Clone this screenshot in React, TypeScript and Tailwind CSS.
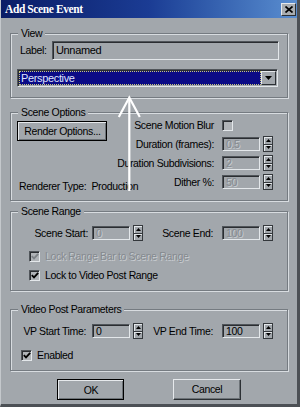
import React from 'react';

const face = 'bg-[#a2a7ac]';

function Sunken({ w, value, disabled, className = '' }: { w: string; value: string; disabled?: boolean; className?: string }) {
  return (
    <div
      className={
        'flex items-center border border-t-[#50555a] border-l-[#50555a] border-b-[#e3e7ea] border-r-[#e3e7ea] shadow-[inset_1px_1px_0_#2a2d31] pl-[3px] ' +
        w + ' ' + className + ' ' +
        (disabled ? 'text-[#858a8f] [text-shadow:1px_1px_0_#c9cdd1]' : 'text-black')
      }
    >
      {value}
    </div>
  );
}

function Spin() {
  return (
    <div className="ml-[3px] flex h-[16px] w-[10px] shrink-0 flex-col border border-[#34383c] bg-[#a2a7ac]">
      <div className="flex flex-1 items-center justify-center border-b border-[#34383c] shadow-[inset_1px_1px_0_#e3e7ea]">
        <svg width="5" height="3" viewBox="0 0 5 3"><path d="M2.5 0L5 3H0z" fill="#000" /></svg>
      </div>
      <div className="flex flex-1 items-center justify-center shadow-[inset_1px_1px_0_#e3e7ea]">
        <svg width="5" height="3" viewBox="0 0 5 3"><path d="M0 0H5L2.5 3z" fill="#000" /></svg>
      </div>
    </div>
  );
}

function Check({ checked, disabled }: { checked?: boolean; disabled?: boolean }) {
  return (
    <div className="flex h-[11px] w-[11px] shrink-0 items-center justify-center border border-t-[#50555a] border-l-[#50555a] border-b-[#e3e7ea] border-r-[#e3e7ea] bg-[#b0b4b8] shadow-[inset_1px_1px_0_#2a2d31]">
      {checked && (
        <svg width="8" height="7" viewBox="0 0 8 7">
          <path d="M0.8 3.2L3 5.4L7.2 0.8" fill="none" stroke={disabled ? '#7d8287' : '#000'} strokeWidth="1.8" />
        </svg>
      )}
    </div>
  );
}

function Group({ title, className, children }: { title: string; className: string; children: React.ReactNode }) {
  return (
    <fieldset className={'ml-[9px] w-[278px] shrink-0 border border-[#757b81] pl-[6px] shadow-[inset_1px_1px_0_#d8dce0,1px_1px_0_#d8dce0] ' + className}>
      <legend className="ml-[1px] bg-[#a2a7ac] px-[3px] leading-[13px]">{title}</legend>
      {children}
    </fieldset>
  );
}

export default function App() {
  return (
    <div className={"relative flex h-[407px] w-[300px] flex-col overflow-hidden whitespace-nowrap border-l border-r-[3px] border-b-[3px] border-l-[#c4c8cc] border-r-[#4c5055] border-b-[#4c5055] text-[10.5px] leading-[13px] tracking-[-0.35px] text-black font-['Liberation_Sans',Arial,sans-serif] " + face}>
      {/* title bar */}
      <div className="flex h-[18px] shrink-0 items-center justify-between bg-linear-to-r from-[#0a1c66] via-[#1b3c94] to-[#5a8ed0] pl-[4px] pr-[1px]">
        <span className="font-['Liberation_Serif',serif] text-[11.5px] font-bold tracking-[-0.4px] text-white">Add Scene Event</span>
        <div className="flex h-[13px] w-[15px] items-center justify-center border border-t-[#e6e9ec] border-l-[#e6e9ec] border-b-[#2c3034] border-r-[#2c3034] bg-[#a9adb1]">
          <svg width="8" height="7" viewBox="0 0 8 7">
            <path d="M0.5 0.5L7.5 6.5M7.5 0.5L0.5 6.5" stroke="#000" strokeWidth="1.7" />
          </svg>
        </div>
      </div>

      {/* View */}
      <Group title="View" className="mt-[9px] pr-[8px] pb-[10px]">
        <div className="mt-[1px] flex items-center">
          <span className="ml-[3px] w-[32px]">Label:</span>
          <Sunken w="flex-1" value="Unnamed" className="h-[19px] text-[11px]" />
        </div>
        <div className="mt-[9px] mr-[1px] flex h-[18px] border border-t-[#50555a] border-l-[#50555a] border-b-[#e3e7ea] border-r-[#e3e7ea] shadow-[inset_1px_1px_0_#2a2d31] p-[1px]">
          <div className="flex flex-1 items-center bg-[#0b0b86] pl-[2px] text-[11px] text-[#dfe2ff] outline-1 outline-dotted outline-[#c8c87a] -outline-offset-1">
            Perspective
          </div>
          <div className="flex w-[15px] items-center justify-center border border-t-[#e6e9ec] border-l-[#e6e9ec] border-b-[#2c3034] border-r-[#2c3034] bg-[#a2a7ac]">
            <svg width="7" height="4" viewBox="0 0 7 4"><path d="M0 0H7L3.5 4z" fill="#000" /></svg>
          </div>
        </div>
      </Group>

      {/* Scene Options */}
      <Group title="Scene Options" className="mt-[8px] pr-[14px] pb-[7px]">
        <div className="flex">
          <div className="flex w-[90px] shrink-0 flex-col">
            <div className="mt-[2px] flex h-[20px] w-[90px] items-center justify-center border border-black">
              <div className="flex h-full w-full items-center justify-center border-t border-l border-t-[#e6e9ec] border-l-[#e6e9ec] shadow-[inset_-1px_-1px_0_#6d7378]">
                Render Options...
              </div>
            </div>
            <div className="mt-[39px] ml-[2px] whitespace-pre">Renderer Type:  Production</div>
          </div>
          <div className="flex min-w-0 flex-1 flex-col items-end">
            <div className="flex h-[12px] items-center">
              <span>Scene Motion Blur</span>
              <div className="ml-[8px] w-[51px]"><Check /></div>
            </div>
            <div className="mt-[5px] flex items-center">
              <span>Duration (frames):</span>
              <Sunken w="ml-[8px] w-[38px]" value="0.5" disabled className="h-[14px]" />
              <Spin />
            </div>
            <div className="mt-[3px] flex items-center">
              <span>Duration Subdivisions:</span>
              <Sunken w="ml-[8px] w-[38px]" value="2" disabled className="h-[14px]" />
              <Spin />
            </div>
            <div className="mt-[3px] flex items-center">
              <span>Dither %:</span>
              <Sunken w="ml-[8px] w-[38px]" value="50" disabled className="h-[14px]" />
              <Spin />
            </div>
          </div>
        </div>
      </Group>

      {/* Scene Range */}
      <Group title="Scene Range" className="mt-[4px] pr-[14px] pb-[8px]">
        <div className="mt-[7px] flex items-center">
          <span className="w-[71px] text-right">Scene Start:</span>
          <Sunken w="ml-[4px] w-[38px]" value="0" disabled className="h-[14px]" />
          <Spin />
          <span className="w-[70px] text-right">Scene End:</span>
          <Sunken w="ml-[9px] w-[38px]" value="100" disabled className="h-[14px]" />
          <Spin />
        </div>
        <div className="mt-[9px] ml-[12px] flex items-center">
          <Check checked disabled />
          <span className="ml-[5px] text-[#858a8f] [text-shadow:1px_1px_0_#c9cdd1]">Lock Range Bar to Scene Range</span>
        </div>
        <div className="mt-[6px] ml-[12px] flex items-center">
          <Check checked />
          <span className="ml-[5px]">Lock to Video Post Range</span>
        </div>
      </Group>

      {/* Video Post Parameters */}
      <Group title="Video Post Parameters" className="mt-[12px] pr-[14px] pb-[8px]">
        <div className="mt-[7px] flex items-center">
          <span className="w-[69px] text-right">VP Start Time:</span>
          <Sunken w="ml-[6px] w-[38px]" value="0" className="h-[14px]" />
          <Spin />
          <span className="w-[70px] text-right">VP End Time:</span>
          <Sunken w="ml-[9px] w-[38px]" value="100" className="h-[14px]" />
          <Spin />
        </div>
        <div className="mt-[10px] ml-[4px] flex items-center">
          <Check checked />
          <span className="ml-[5px]">Enabled</span>
        </div>
      </Group>

      {/* buttons */}
      <div className="mt-[8px] flex shrink-0">
        <div className="ml-[56px] flex h-[21px] w-[67px] border border-black">
          <div className="flex h-full w-full items-center justify-center border-t border-l border-t-[#e6e9ec] border-l-[#e6e9ec] shadow-[inset_-1px_-1px_0_#6d7378]">OK</div>
        </div>
        <div className="ml-[49px] flex h-[21px] w-[68px] items-center justify-center border border-t-[#e6e9ec] border-l-[#e6e9ec] border-b-[#2c3034] border-r-[#2c3034] shadow-[inset_-1px_-1px_0_#6d7378]">
          Cancel
        </div>
      </div>

      {/* white arrow annotation over the dialog */}
      <svg className="pointer-events-none absolute left-[116px] top-[95px]" width="24" height="98" viewBox="0 0 24 98">
        <path d="M12.3 3V96" stroke="#fff" strokeWidth="2.2" />
        <path d="M1.8 22L12.3 2.5L22.8 22" fill="none" stroke="#fff" strokeWidth="2.2" />
      </svg>
    </div>
  );
}
